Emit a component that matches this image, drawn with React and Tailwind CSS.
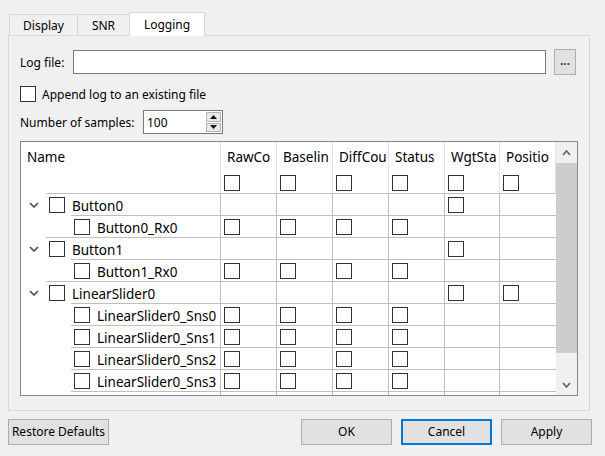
import React from "react";

const Box = () => <div className="w-4 h-4 border border-[#333333] bg-white shrink-0" />;

const ChevronDown = ({ w = 10, h = 6, color = "#4a4a4a", sw = 1.6 }) => (
  <svg width={w} height={h} viewBox={`0 0 ${w} ${h}`} className="block">
    <polyline points={`1,1 ${w / 2},${h - 1} ${w - 1},1`} fill="none" stroke={color} strokeWidth={sw} />
  </svg>
);

const ChevronUp = ({ w = 10, h = 6, color = "#606060", sw = 1.5 }) => (
  <svg width={w} height={h} viewBox={`0 0 ${w} ${h}`} className="block">
    <polyline points={`1,${h - 1} ${w / 2},1 ${w - 1},${h - 1}`} fill="none" stroke={color} strokeWidth={sw} />
  </svg>
);

const headers = ["RawCo", "Baselin", "DiffCou", "Status", "WgtSta", "Positio"];

const rows = [
  { name: "Button0", level: 0, cells: [0, 0, 0, 0, 1, 0] },
  { name: "Button0_Rx0", level: 1, cells: [1, 1, 1, 1, 0, 0] },
  { name: "Button1", level: 0, cells: [0, 0, 0, 0, 1, 0] },
  { name: "Button1_Rx0", level: 1, cells: [1, 1, 1, 1, 0, 0] },
  { name: "LinearSlider0", level: 0, cells: [0, 0, 0, 0, 1, 1] },
  { name: "LinearSlider0_Sns0", level: 1, cells: [1, 1, 1, 1, 0, 0] },
  { name: "LinearSlider0_Sns1", level: 1, cells: [1, 1, 1, 1, 0, 0] },
  { name: "LinearSlider0_Sns2", level: 1, cells: [1, 1, 1, 1, 0, 0] },
  { name: "LinearSlider0_Sns3", level: 1, cells: [1, 1, 1, 1, 0, 0] },
  { name: "", level: 1, cells: [0, 0, 0, 0, 0, 0] },
];

const Row = ({ r }) => (
  <div className="grid grid-cols-[200px_56px_56px_56px_56px_55px_56px] h-[22px] shrink-0">
    <div className="flex border-r border-[#bfbfbf]">
      <div className={`${r.level === 0 ? "w-[25px]" : "w-[50px]"} shrink-0 flex items-center justify-center pt-[1px]`}>
        {r.level === 0 && r.name && <ChevronDown />}
      </div>
      <div className="flex-1 border-t border-[#bfbfbf] flex items-center pl-[3px] gap-[7px] whitespace-nowrap overflow-hidden">
        {r.name && <Box />}
        <span className="pt-[2px]">{r.name}</span>
      </div>
    </div>
    {r.cells.map((c, i) => (
      <div
        key={i}
        className={`border-t border-[#bfbfbf] flex items-center pl-[3px] ${i < 5 ? "border-r" : ""}`}
      >
        {c ? <Box /> : null}
      </div>
    ))}
  </div>
);

const Btn = ({ children, w, primary }) => (
  <div
    className={`${w} h-[26px] flex items-center justify-center bg-[#e1e1e1] ${
      primary ? "border-2 border-[#0078d7]" : "border border-[#adadad]"
    }`}
  >
    {children}
  </div>
);

export default function App() {
  return (
    <div className="w-[605px] h-[456px] bg-[#f0f0f0] font-['Noto_Sans',sans-serif] text-[12px] text-black overflow-hidden flex flex-col">
      {/* Tabs */}
      <div className="h-[35px] flex items-end pl-[9px] shrink-0">
        <div className="w-[69px] h-[21px] border-t border-l border-r border-[#d9d9d9] flex items-center justify-center pt-[2px]">
          Display
        </div>
        <div className="w-[51px] h-[21px] border-t border-[#d9d9d9] flex items-center justify-center pt-[2px]">SNR</div>
        <div className="relative z-10 w-[76px] h-[24px] -mb-px bg-white border-t border-l border-r border-[#d9d9d9] flex items-center justify-center pt-[1px]">
          Logging
        </div>
      </div>

      {/* Pane */}
      <div className="ml-[8px] w-[582px] h-[376px] border border-[#d9d9d9] px-[11px] flex flex-col shrink-0">
        <div className="mt-[13px] h-[26px] flex items-center">
          <div className="w-[53px] pt-[2px]">Log file:</div>
          <div className="w-[473px] h-[24px] border border-[#7a7a7a] bg-white" />
          <div className="ml-[8px] w-[22px] h-[26px] border border-[#adadad] bg-[#e1e1e1] flex items-center justify-center font-bold text-[#4a3a20] leading-none pb-[2px]">
            ...
          </div>
        </div>

        <div className="mt-[11px] h-[16px] flex items-center gap-[6px]">
          <Box />
          <span className="pt-[1px]">Append log to an existing file</span>
        </div>

        <div className="mt-[8px] h-[24px] flex items-center">
          <div className="w-[123px] pt-[1px]">Number of samples:</div>
          <div className="w-[80px] h-[24px] border border-[#7a7a7a] bg-white flex items-center">
            <span className="flex-1 pl-[3px] pt-[1px]">100</span>
            <div className="h-full flex flex-col gap-[1px] py-[1px] mr-[1px]">
              <div className="w-[15px] flex-1 border border-[#b5b5b5] bg-[#e8e8e8] flex items-center justify-center">
                <svg width="7" height="4" viewBox="0 0 7 4" className="block">
                  <polygon points="0,4 3.5,0 7,4" fill="#111" />
                </svg>
              </div>
              <div className="w-[15px] flex-1 border border-[#b5b5b5] bg-[#e8e8e8] flex items-center justify-center">
                <svg width="7" height="4" viewBox="0 0 7 4" className="block">
                  <polygon points="0,0 7,0 3.5,4" fill="#111" />
                </svg>
              </div>
            </div>
          </div>
        </div>

        {/* Tree table */}
        <div className="mt-[7px] w-[558px] h-[255px] border border-[#828790] bg-white flex overflow-hidden text-[13.5px]">
          <div className="w-[535px] flex flex-col overflow-hidden">
            <div className="grid grid-cols-[200px_56px_56px_56px_56px_55px_56px] h-[51px] shrink-0">
              <div className="border-r border-[#e5e5e5] pt-[5px] pl-[6px]">
                <div className="leading-[20px]">Name</div>
              </div>
              {headers.map((h) => (
                <div key={h} className="border-r border-[#e5e5e5] pt-[5px] pl-[6px] flex flex-col overflow-hidden">
                  <div className="leading-[20px] whitespace-nowrap overflow-hidden">{h}</div>
                  <div className="mt-[8px] -ml-[3px]">
                    <Box />
                  </div>
                </div>
              ))}
            </div>
            {rows.map((r, i) => (
              <Row key={i} r={r} />
            ))}
          </div>
          <div className="w-[21px] bg-[#f0f0f0] flex flex-col shrink-0">
            <div className="h-[21px] flex items-center justify-center">
              <ChevronUp w={9} h={6} sw={1.6} />
            </div>
            <div className="h-[190px] bg-[#cdcdcd]" />
            <div className="flex-1" />
            <div className="h-[21px] flex items-center justify-center">
              <ChevronDown w={9} h={6} color="#606060" sw={1.6} />
            </div>
          </div>
        </div>
      </div>

      {/* Buttons */}
      <div className="mt-[8px] h-[26px] flex shrink-0">
        <div className="ml-[8px]">
          <Btn w="w-[101px]">Restore Defaults</Btn>
        </div>
        <div className="flex-1" />
        <Btn w="w-[91px]">OK</Btn>
        <div className="w-[9px]" />
        <Btn w="w-[91px]" primary>
          Cancel
        </Btn>
        <div className="w-[9px]" />
        <Btn w="w-[91px]">Apply</Btn>
        <div className="w-[13px]" />
      </div>
    </div>
  );
}
